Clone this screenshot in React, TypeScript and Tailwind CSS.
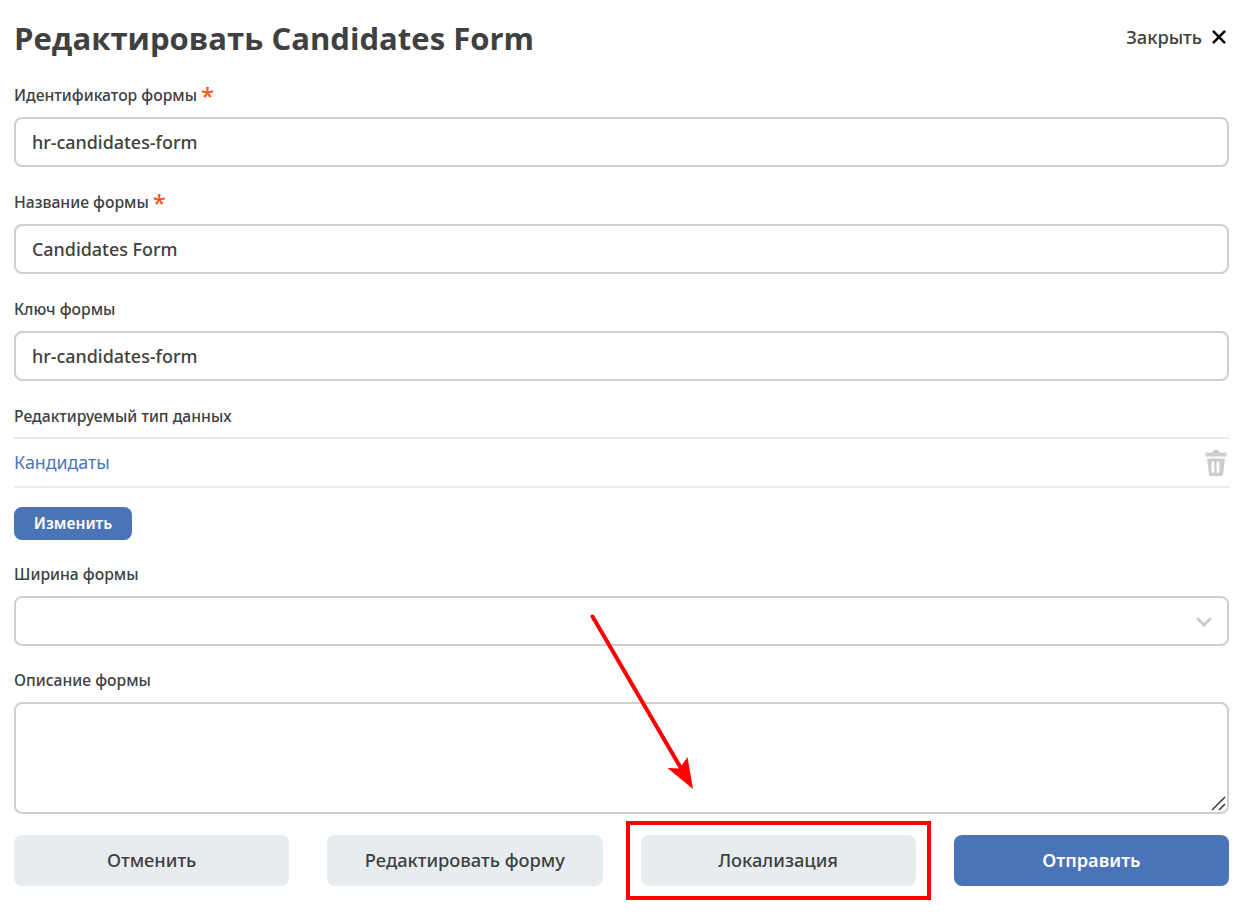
import type { ReactNode } from "react";

function Label({ children, required = false }: { children: ReactNode; required?: boolean }) {
  return (
    <span className="flex h-6 items-center whitespace-nowrap pb-0.5 text-[15.700px] font-medium leading-6 text-[#404040]">
      {children}
      {required && <span className="relative top-[1px] ml-[4px] text-[24px] leading-6 text-[#ff5416]">*</span>}
    </span>
  );
}

function TextField({ label, value, required }: { label: string; value: string; required?: boolean }) {
  return (
    <label className="block h-[107px]">
      <Label required={required}>{label}</Label>
      <input
        defaultValue={value}
        className="mt-[9px] block h-[50px] w-full rounded-lg border-2 border-[#cfcfcf] bg-white px-4 text-[17.900px] font-medium text-[#404040] outline-none"
      />
    </label>
  );
}

function TrashIcon() {
  return (
    <svg width="22" height="26" viewBox="0 0 22 26" fill="#cdcdcd">
      <path d="M8 2.5V1.5Q8 0 9.500 0H12.500Q14 0 14 1.500V2.500H20.500Q21.500 2.500 21.500 3.500V5.500Q21.500 6.500 20.500 6.500H1.500Q.5 6.500.5 5.500V3.500Q.5 2.500 1.500 2.500Z" />
      <path
        fillRule="evenodd"
        d="M3 8.500H19Q20 8.500 19.900 9.500L18 24.500Q17.800 26 16.300 26H5.700Q4.200 26 4 24.500L2.100 9.500Q2 8.500 3 8.500ZM7.900 11.500Q6.500 11.500 6.500 12.700V21.800Q6.500 23 7.900 23T9.300 21.800V12.700Q9.300 11.500 7.900 11.500ZM13 11.500Q11.600 11.500 11.600 12.700V21.800Q11.600 23 13 23T14.400 21.800V12.700Q14.400 11.500 13 11.500Z"
      />
    </svg>
  );
}

const secondary =
  "h-[51px] rounded-lg bg-[#e7edef] pb-0.5 text-[18.300px] font-medium text-[#404040]";

export default function App() {
  return (
    <main className="relative h-[915px] w-[1251px] overflow-hidden bg-white pl-[14px] pr-[22px] font-['Noto_Sans',sans-serif]">
      <header className="flex h-[84px] items-start justify-between">
        <h1 className="pt-[18px] font-['Open_Sans',sans-serif] text-[31.050px] font-bold leading-[40px] text-[#404040]">
          Редактировать Candidates Form
        </h1>
        <button className="flex items-center gap-[10px] pr-[3px] pt-[24px] text-[18.300px] font-medium leading-[26px] text-[#404040]">
          Закрыть
          <svg width="14" height="14" viewBox="0 0 14 14" stroke="#000" strokeWidth="2.5" strokeLinecap="round">
            <path d="M1.700 1.700 12.300 12.300M12.300 1.700 1.700 12.300" />
          </svg>
        </button>
      </header>

      <TextField label="Идентификатор формы" value="hr-candidates-form" required />
      <TextField label="Название формы" value="Candidates Form" required />
      <TextField label="Ключ формы" value="hr-candidates-form" />

      <section className="h-[158px]">
        <Label>Редактируемый тип данных</Label>
        <div className="mt-[8px] flex h-[51px] items-center justify-between border-y-2 border-[#e7edef] pr-[2px]">
          <a className="text-[17.800px] text-[#4c75b9]">Кандидаты</a>
          <button aria-label="Удалить"><TrashIcon /></button>
        </div>
        <button className="mt-[19px] h-[33px] w-[118px] rounded-lg bg-[#4b74b8] text-[15.600px] font-semibold text-white">
          Изменить
        </button>
      </section>

      <section className="h-[106px]">
        <Label>Ширина формы</Label>
        <div className="mt-[9px] flex h-[50px] items-center justify-end rounded-lg border-2 border-[#cfcfcf] pr-[15px] pt-0.5">
          <svg width="16" height="10" viewBox="0 0 16 10" fill="none" stroke="#cdcdcd" strokeWidth="3" strokeLinecap="round">
            <path d="M2 2 8 8 14 2" />
          </svg>
        </div>
      </section>

      <section className="h-[166px]">
        <Label>Описание формы</Label>
        <div className="mt-[9px] flex h-[112px] items-end rounded-lg border-2 border-[#cfcfcf] pr-px pb-px">
          <textarea className="h-full min-w-0 flex-1 resize-none rounded-lg p-3 outline-none" />
          <svg width="15" height="15" viewBox="0 0 15 15" stroke="#404040" strokeWidth="1.700" strokeLinecap="round">
            <path d="M1.500 13.500 13.500 1.500M8.500 13.500 13.500 8.500" />
          </svg>
        </div>
      </section>

      <footer className="grid grid-cols-4 gap-[38px]">
        <button className={secondary}>Отменить</button>
        <button className={secondary}>Редактировать форму</button>
        <button className={secondary}>Локализация</button>
        <button className="h-[51px] rounded-lg bg-[#4b74b8] text-[18.200px] font-semibold text-white">Отправить</button>
      </footer>

      <div className="pointer-events-none absolute left-[626px] top-[821px] h-[79px] w-[305px] border-4 border-[#ff0000]" />
      <svg className="pointer-events-none absolute left-[580px] top-[605px]" width="130" height="195" viewBox="580 605 130 195">
        <path d="M592.500 616.500 682 770" stroke="#ff0000" strokeWidth="4" strokeLinecap="round" />
        <path d="M693 789 667.500 768 679.500 768.500 687.500 757Z" fill="#ff0000" />
      </svg>
    </main>
  );
}
